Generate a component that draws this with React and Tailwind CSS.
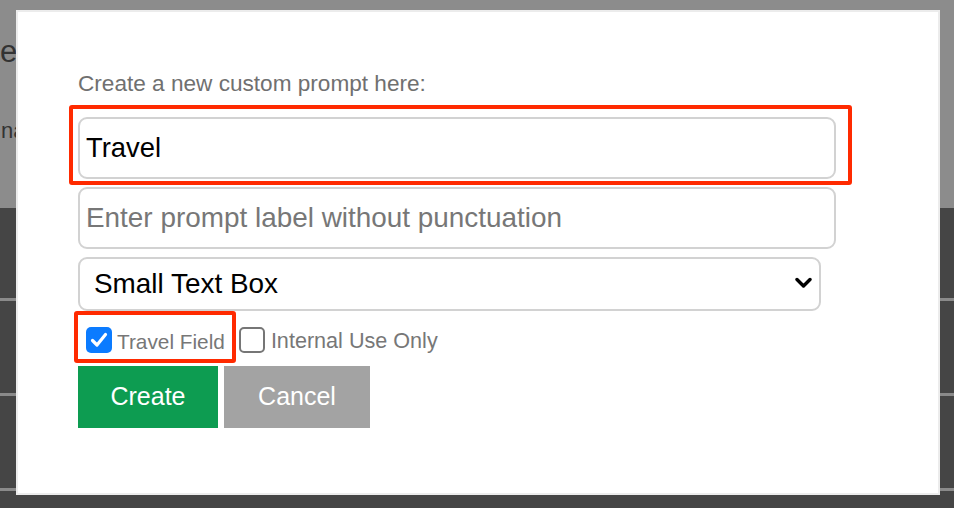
import { useState } from 'react'

const font = { fontFamily: '"Liberation Sans", Arial, sans-serif' }

function Checkbox({ checked }) {
  if (checked) {
    return (
      <span className="flex h-[26px] w-[26px] shrink-0 items-center justify-center rounded-[5px] bg-[#0b7bff]">
        <svg width="18" height="16" viewBox="0 0 18 16" fill="none">
          <path d="M2.5 8.5 L7 13 L15.5 2.5" stroke="white" strokeWidth="3.2" strokeLinecap="round" strokeLinejoin="round" />
        </svg>
      </span>
    )
  }
  return <span className="block h-[26px] w-[26px] shrink-0 rounded-[5px] border-2 border-[#767676] bg-white" />
}

export default function App() {
  const [name, setName] = useState('Travel')
  const [label, setLabel] = useState('')

  return (
    <div className="relative h-[508px] w-[954px] overflow-hidden bg-[#454545]" style={font}>
      {/* page behind the dialog */}
      <div className="flex h-[208px] flex-col bg-[#8c8c8c] text-[#333]">
        <div className="mt-[34px] text-[31px] leading-[36px]">e</div>
        <div className="mt-[48px] pl-[1px] text-[22px] leading-[26px]">name</div>
      </div>
      <div className="h-[90px]" />
      <div className="h-[3px] bg-[#8a8a8a]" />
      <div className="h-[92px]" />
      <div className="h-[3px] bg-[#8a8a8a]" />
      <div className="h-[92px]" />
      <div className="h-[3px] bg-[#8a8a8a]" />

      {/* dialog */}
      <div className="absolute left-[16px] top-[10px] h-[485px] w-[924px] border-2 border-[#ececec] bg-white pl-[60px] pt-[59px]">
        <div className="text-[22.6px] leading-[26px] text-[#707070]">Create a new custom prompt here:</div>
        <input
          value={name}
          onChange={e => setName(e.target.value)}
          className="mt-[20px] block h-[62px] w-[758px] rounded-[9px] border-2 border-[#d2d2d2] px-[6px] text-[27.4px] text-black outline-none"
        />
        <input
          value={label}
          onChange={e => setLabel(e.target.value)}
          placeholder="Enter prompt label without punctuation"
          className="mt-[8px] block h-[62px] w-[758px] rounded-[9px] border-2 border-[#d2d2d2] px-[6px] text-[27.9px] text-black outline-none placeholder:text-[#777]"
        />
        <div className="relative mt-[8px] w-[743px]">
          <select className="block h-[54px] w-full appearance-none rounded-[9px] border-2 border-[#d2d2d2] bg-white pl-[14px] text-[27.9px] text-black outline-none">
            <option>Small Text Box</option>
            <option>Large Text Box</option>
            <option>Dropdown</option>
          </select>
          <svg className="pointer-events-none absolute right-[9px] top-[20px]" width="17" height="12" viewBox="0 0 17 12" fill="none">
            <path d="M2 2.5 L8.5 9 L15 2.5" stroke="black" strokeWidth="3.4" strokeLinecap="round" strokeLinejoin="round" />
          </svg>
        </div>
        <div className="flex h-[55px] items-center pl-[8px] pt-[3px] text-[#777]">
          <Checkbox checked />
          <span className="ml-[5px] pt-[3px] text-[20.8px]">Travel Field</span>
          <span className="ml-[14px]"><Checkbox /></span>
          <span className="ml-[6px] pt-[3px] text-[21.6px]">Internal Use Only</span>
        </div>
        <div className="flex gap-[6px]">
          <button className="h-[62px] w-[140px] bg-[#0d9c51] text-[25px] text-white">Create</button>
          <button className="h-[62px] w-[146px] bg-[#a3a3a3] text-[25px] text-white">Cancel</button>
        </div>
      </div>

      {/* annotation boxes */}
      <div className="absolute left-[69px] top-[105px] h-[80px] w-[783px] rounded-[3px] border-4 border-[#ff2a00]" />
      <div className="absolute left-[74px] top-[311px] h-[52px] w-[162px] rounded-[3px] border-4 border-[#ff2a00]" />
    </div>
  )
}
